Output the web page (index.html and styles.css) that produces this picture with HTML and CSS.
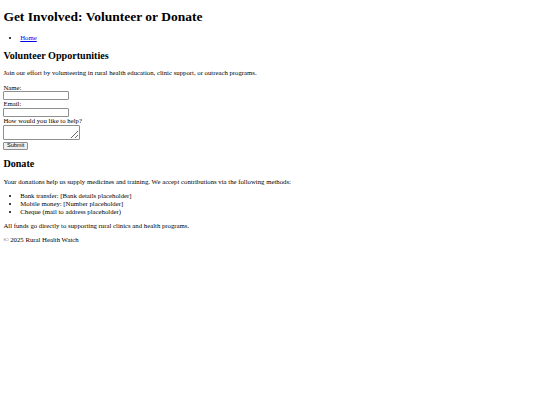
FILE: index.html
```html
<!DOCTYPE html>
<html lang="en">
<head>
<meta charset="utf-8">
<title>Get Involved: Volunteer or Donate</title>
<link rel="stylesheet" href="styles.css">
</head>
<body class="page">
<header>
<h1 class="title">Get Involved: Volunteer or Donate</h1>
<nav>
<ul class="list">
<li><a class="link" href="#">Home</a></li>
</ul>
</nav>
</header>
<main>
<section>
<h2 class="heading">Volunteer Opportunities</h2>
<p class="para">Join our effort by volunteering in rural health education, clinic support, or outreach programs.</p>
<form class="form">
<label for="name">Name:</label><br>
<input class="field" type="text" id="name"><br>
<label for="email">Email:</label><br>
<input class="field" type="email" id="email"><br>
<label for="help">How would you like to help?</label><br>
<textarea class="area" id="help"></textarea><br>
<button class="btn" type="submit">Submit</button>
</form>
</section>
<section>
<h2 class="heading">Donate</h2>
<p class="para">Your donations help us supply medicines and training. We accept contributions via the following methods:</p>
<ul class="list">
<li>Bank transfer: [Bank details placeholder]</li>
<li>Mobile money: [Number placeholder]</li>
<li>Cheque (mail to address placeholder)</li>
</ul>
<p class="para">All funds go directly to supporting rural clinics and health programs.</p>
</section>
</main>
<footer>
<p class="para">&copy; 2025 Rural Health Watch</p>
</footer>
</body>
</html>
```
FILE: styles.css
```css
.page {
  margin: 0 3.375px 3.375px;
  font-family: "Liberation Serif", serif;
  font-size: 6.75px;
  line-height: 7.6px;
  color: #000;
  background: #fff;
}
.title {
  font-size: 13.5px;
  line-height: 15.6px;
  font-weight: bold;
  margin: 9.05px 0;
}
.heading {
  font-size: 10.125px;
  line-height: 11.4px;
  font-weight: bold;
  margin: 8.4px 0;
}
.para {
  margin: 6.75px 0;
}
.list {
  margin: 6.75px 0;
  padding-left: 16.875px;
}
.link {
  color: #0000ee;
}
.form {
  margin: 0;
}
.field {
  font-family: "Liberation Sans", sans-serif;
  font-size: 5.6px;
  line-height: normal;
  width: 66px;
  height: 9px;
  padding: 0 1px;
  border: 1px solid #8f8f8f;
  border-radius: 1px;
  margin: 0;
  box-sizing: border-box;
  vertical-align: baseline;
}
.area {
  font-size: 5.6px;
  line-height: normal;
  width: 77px;
  height: 15.2px;
  padding: 1px;
  border: 1px solid #8f8f8f;
  border-radius: 1px;
  margin: 0;
  box-sizing: border-box;
  vertical-align: baseline;
}
.btn {
  font-family: "Liberation Sans", sans-serif;
  font-size: 5.6px;
  width: 24.5px;
  height: 7.5px;
  padding: 0;
  border: 1px solid #8f8f8f;
  border-radius: 1px;
  background: #efefef;
  color: #000;
  margin: 0;
  box-sizing: border-box;
  line-height: 1;
}
```
